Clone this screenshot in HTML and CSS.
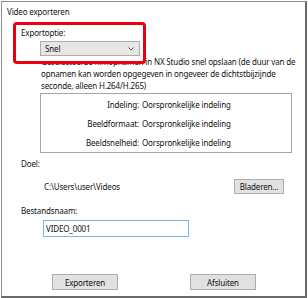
FILE: index.html
```html
<!DOCTYPE html>
<html>
<head>
  <meta charset="UTF-8">
  <title>Video exporteren</title>
  <link rel="stylesheet" href="styles.css">
</head>
<body>
<div class="window">
  <div class="title">Video exporteren</div>
  <div class="content">
    <div class="option">
      <div class="label">Exportoptie:</div>
      <div class="select">
        <span>Snel</span>
        <svg width="6" height="4" viewBox="0 0 6 4"><path d="M0.5 0.5 L3 3 L5.5 0.5" fill="none" stroke="#555" stroke-width="1"/></svg>
      </div>
    </div>
    <p class="desc">Geselecteerde filmopnamen in NX Studio snel opslaan (de duur van de<br>opnamen kan worden opgegeven in ongeveer de dichtstbijzijnde<br>seconde, alleen H.264/H.265)</p>
    <div class="info">
      <span class="key">Indeling:</span><span>Oorspronkelijke indeling</span>
      <span class="key">Beeldformaat:</span><span>Oorspronkelijke indeling</span>
      <span class="key">Beeldsnelheid:</span><span>Oorspronkelijke indeling</span>
    </div>
    <div class="label gap-doel">Doel:</div>
    <div class="dest">
      <span class="path">C:\Users\user\Videos</span>
      <button class="btn browse">Bladeren...</button>
    </div>
    <div class="label gap-name">Bestandsnaam:</div>
    <input class="name" type="text" value="VIDEO_0001">
    <div class="actions">
      <button class="btn wide">Exporteren</button>
      <button class="btn wide">Afsluiten</button>
    </div>
  </div>
</div>
</body>
</html>
```

FILE: styles.css
```css
body {
  margin: 0;
  background: #fff;
  font-family: "Noto Sans", sans-serif;
  font-size: 8px;
  letter-spacing: -0.15px;
  color: #111;
}
.window {
  box-sizing: border-box;
  margin: 1px 0 0 1px;
  width: 306px;
  height: 297px;
  border: 1px solid #8e8e8e;
  border-right: 2px solid #6a6a6a;
  border-bottom: 2px solid #6a6a6a;
  background: #fff;
}
.title {
  height: 20px;
  line-height: 20px;
  padding-left: 5px;
}
.content {
  padding: 5px 0 0 19px;
}
.label {
  line-height: 12px;
}
.option {
  position: relative;
  z-index: 1;
}
.option::before {
  content: "";
  position: absolute;
  top: -5px;
  left: -8px;
  width: 133px;
  height: 42px;
  box-sizing: border-box;
  border: 3px solid #e60012;
  border-radius: 4px;
  background: #fff;
  z-index: -1;
}
.select {
  box-sizing: border-box;
  margin: 2px 0 0 19px;
  width: 100px;
  height: 15px;
  border: 1px solid #acacac;
  background: #e6e6e6;
  display: flex;
  align-items: center;
  justify-content: space-between;
  padding: 0 5px 0 4px;
}
.desc {
  margin: 0 0 0 20px;
  line-height: 12px;
  white-space: nowrap;
}
.info {
  box-sizing: border-box;
  margin: 1px 0 0 19px;
  width: 252px;
  height: 60px;
  border: 1px solid #a5a5a5;
  padding-top: 1px;
  display: grid;
  grid-template-columns: 98px 1fr;
  grid-auto-rows: 19px;
  align-items: center;
}
.key {
  text-align: right;
}
.info .key + span {
  padding-left: 3px;
}
.gap-doel {
  margin-top: 5px;
}
.dest {
  margin: 9px 0 0 23px;
  width: 240px;
  display: flex;
  align-items: center;
  justify-content: space-between;
}
.btn {
  box-sizing: border-box;
  font: inherit;
  letter-spacing: inherit;
  color: #111;
  background: #e1e1e1;
  border: 1px solid #adadad;
  padding: 0;
  height: 15px;
}
.browse {
  width: 50px;
}
.gap-name {
  margin-top: 11px;
}
.name {
  display: block;
  box-sizing: border-box;
  margin: 3px 0 0 22px;
  width: 146px;
  height: 17px;
  border: 1px solid #7eb4ea;
  padding: 0 2px;
  font: inherit;
  letter-spacing: inherit;
  color: #111;
  outline: none;
}
.actions {
  margin: 37px 0 0 31px;
  display: flex;
  gap: 72px;
}
.wide {
  width: 66px;
  height: 16px;
}
```
